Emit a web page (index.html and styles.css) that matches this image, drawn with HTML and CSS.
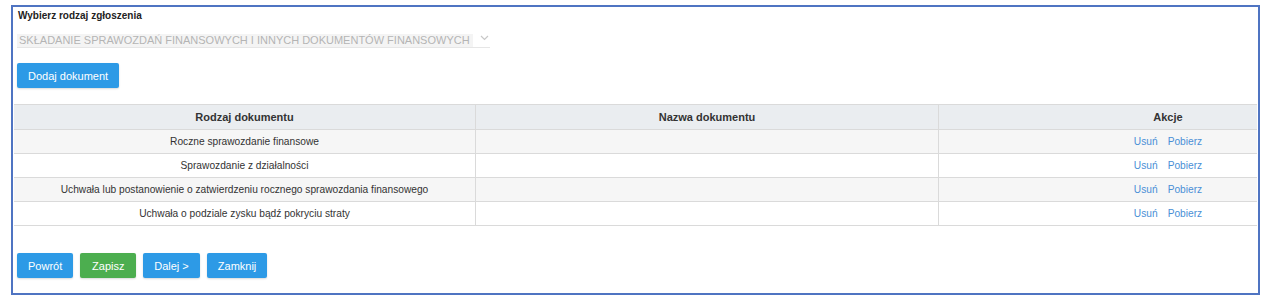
FILE: index.html
```html
<!DOCTYPE html>
<html lang="pl">
<head>
    <meta charset="UTF-8">
    <title>Zgłoszenie</title>
    <link rel="stylesheet" href="styles.css">
</head>
<body>
    <div class="frame">
        <div class="top">
            <label class="field-label">Wybierz rodzaj zgłoszenia</label>
            <div class="select">
                <span class="select-value">SKŁADANIE SPRAWOZDAŃ FINANSOWYCH I INNYCH DOKUMENTÓW FINANSOWYCH</span>
                <svg class="chevron" width="9" height="6" viewBox="0 0 9 6"><path d="M1 1 L4.5 4.5 L8 1" fill="none" stroke="#c8c8c8" stroke-width="1.2"/></svg>
            </div>
            <button type="button" class="btn btn-blue">Dodaj dokument</button>
        </div>

        <table class="docs">
            <thead>
                <tr>
                    <th class="col-type">Rodzaj dokumentu</th>
                    <th class="col-name">Nazwa dokumentu</th>
                    <th class="col-actions">Akcje</th>
                </tr>
            </thead>
            <tbody>
                <tr>
                    <td>Roczne sprawozdanie finansowe</td>
                    <td></td>
                    <td class="col-actions"><a href="#">Usuń</a><a href="#">Pobierz</a></td>
                </tr>
                <tr>
                    <td>Sprawozdanie z działalności</td>
                    <td></td>
                    <td class="col-actions"><a href="#">Usuń</a><a href="#">Pobierz</a></td>
                </tr>
                <tr>
                    <td>Uchwała lub postanowienie o zatwierdzeniu rocznego sprawozdania finansowego</td>
                    <td></td>
                    <td class="col-actions"><a href="#">Usuń</a><a href="#">Pobierz</a></td>
                </tr>
                <tr>
                    <td>Uchwała o podziale zysku bądź pokryciu straty</td>
                    <td></td>
                    <td class="col-actions"><a href="#">Usuń</a><a href="#">Pobierz</a></td>
                </tr>
            </tbody>
        </table>

        <div class="footer">
            <button type="button" class="btn btn-blue">Powrót</button>
            <button type="button" class="btn btn-green">Zapisz</button>
            <button type="button" class="btn btn-blue">Dalej &gt;</button>
            <button type="button" class="btn btn-blue">Zamknij</button>
        </div>
    </div>
</body>
</html>
```

FILE: styles.css
```css
body {
    margin: 0;
    background: #fff;
    font-family: "Liberation Sans", Arial, sans-serif;
    color: #333;
}
.frame {
    margin: 5px 0 0 11px;
    width: 1243px;
    border: 2px solid #4f74c2;
    padding: 0 1px 15px 1px;
}
.top {
    padding: 2px 4px 0 3px;
}
.field-label {
    display: block;
    font-size: 10px;
    font-weight: bold;
    line-height: 14px;
    color: #222;
    padding-left: 1px;
}
.select {
    display: flex;
    align-items: center;
    width: 473px;
    margin-top: 11px;
    height: 13px;
    border-bottom: 1px solid #e6e6e6;
}
.select-value {
    font-size: 11px;
    line-height: 13px;
    color: #b4b4b4;
    background: #f4f4f4;
    padding: 0 3px 0 2px;
}
.chevron {
    margin-left: 7px;
    margin-top: -6px;
}
.btn {
    font-family: "Liberation Sans", Arial, sans-serif;
    font-size: 11px;
    color: #fff;
    border: none;
    border-radius: 2px;
    height: 25px;
    padding: 0 11px;
    cursor: pointer;
    box-shadow: 0 1px 2px rgba(0,0,0,0.15);
}
.btn-blue {
    background: #2d9ae6;
}
.btn-green {
    background: #4cae4f;
}
.top .btn {
    margin-top: 15px;
}
.docs {
    width: 100%;
    margin-top: 16px;
    border-collapse: collapse;
    font-size: 10.2px;
}
.docs th, .docs td {
    border: 1px solid #dadada;
    text-align: center;
    padding: 0;
}
.docs tr > :first-child {
    border-left: none;
}
.docs tr > :last-child {
    border-right: none;
}
.docs th {
    height: 24px;
    background: #eaedf0;
    font-size: 11px;
    font-weight: bold;
    color: #333;
}
.docs td {
    height: 23px;
    color: #333;
}
.docs tbody tr:nth-child(odd) td {
    background: #f6f6f6;
}
.col-type {
    width: 461px;
}
.col-name {
    width: 462px;
}
.docs .col-actions {
    padding-left: 140px;
}
.col-actions a {
    color: #4a8fd6;
    text-decoration: none;
    margin: 0 5px;
}
.footer {
    display: flex;
    gap: 7px;
    margin-top: 27px;
    padding-left: 3px;
}
.footer .btn {
    min-width: 56px;
}
```
